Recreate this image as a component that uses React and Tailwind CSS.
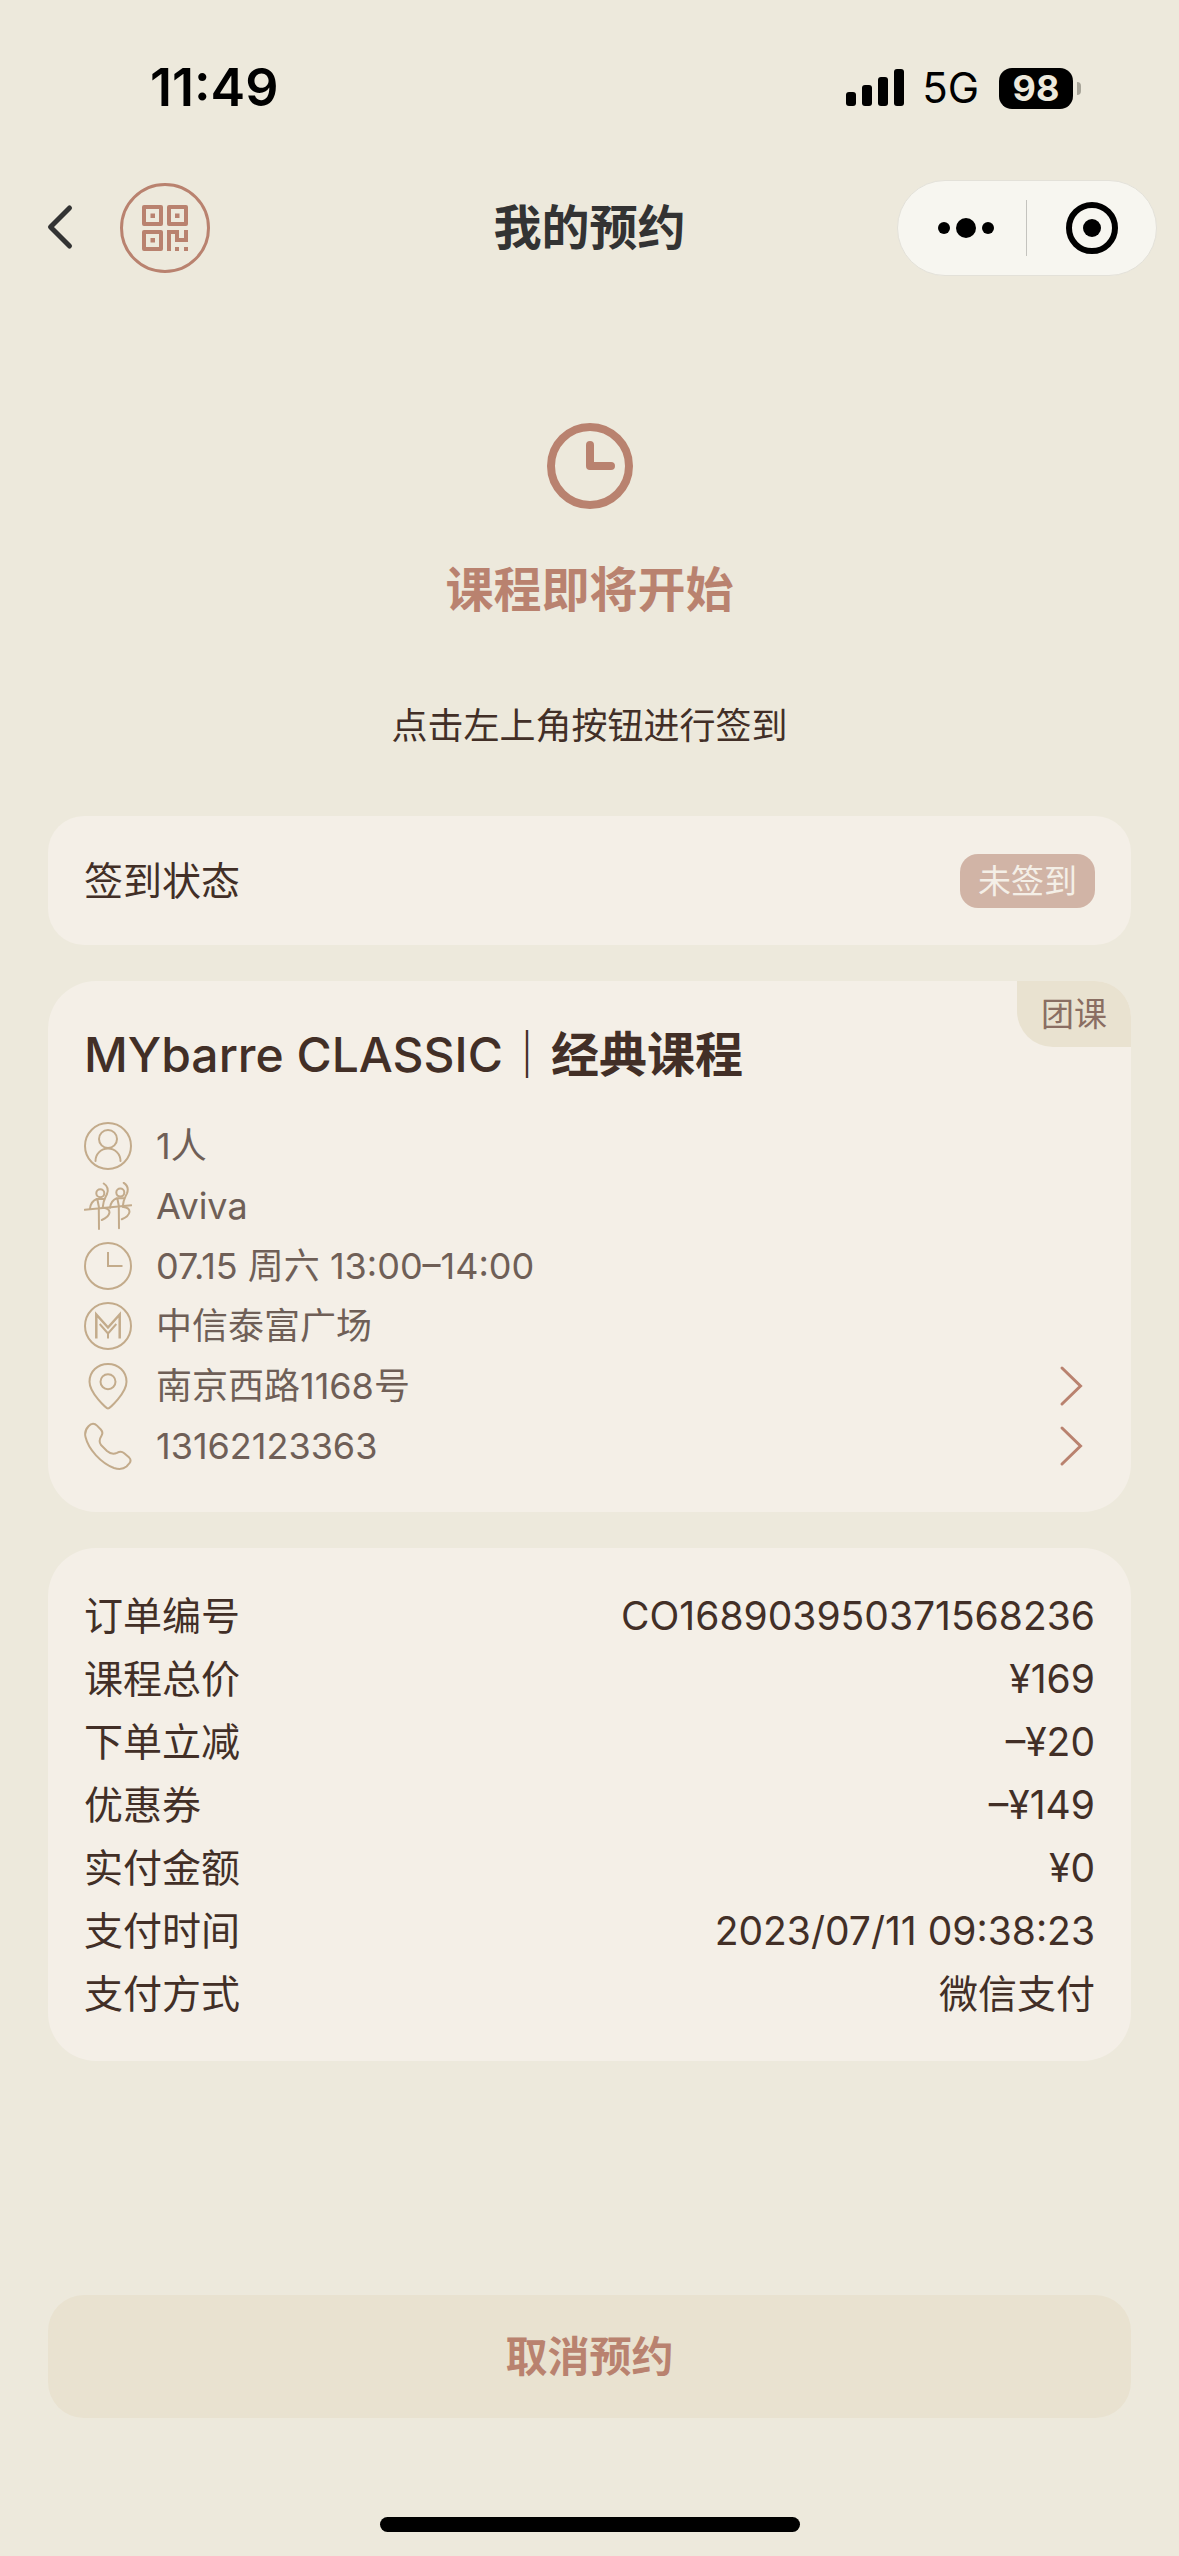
const COURSE = { name: 'MYbarre CLASSIC', localName: '经典课程' }

const COURSE_INFO = [
  { icon: PersonIcon, text: '1人' },
  { icon: DancersIcon, text: 'Aviva' },
  { icon: TimeIcon, text: '07.15 周六 13:00–14:00' },
  { icon: VenueIcon, text: '中信泰富广场' },
  { icon: PinIcon, text: '南京西路1168号', href: '#map' },
  { icon: PhoneIcon, text: '13162123363', href: 'tel:13162123363' },
]

const ORDER_ROWS = [
  { label: '订单编号', value: 'CO168903950371568236' },
  { label: '课程总价', value: '¥169' },
  { label: '下单立减', value: '–¥20' },
  { label: '优惠券', value: '–¥149' },
  { label: '实付金额', value: '¥0' },
  { label: '支付时间', value: '2023/07/11 09:38:23' },
  { label: '支付方式', value: '微信支付' },
]

function LineIcon({ children }) {
  return (
    <svg
      viewBox="0 0 48 48"
      className="size-12 shrink-0 text-[#c3ab8b]"
      fill="none"
      stroke="currentColor"
      strokeWidth="2"
      strokeLinecap="round"
      strokeLinejoin="round"
      aria-hidden="true"
    >
      {children}
    </svg>
  )
}

function PersonIcon() {
  return (
    <LineIcon>
      <circle cx="24" cy="24" r="23" />
      <circle cx="24" cy="17" r="9" />
      <path d="M11.5 39C11.5 32 17 26.5 24 26.5S36.5 32 36.5 39" />
    </LineIcon>
  )
}

function DancersIcon() {
  return (
    <LineIcon>
      <path d="M.8 27.7 47.3 23.2" />
      <g id="dancer">
        <circle cx="16.3" cy="11.3" r="4" />
        <path d="M19.7 1.5C23.5 4 24.5 8 23 12C21.5 15.5 19.5 17 18.7 25.5" />
        <path d="M20 17H12.7C9 18.5 6.5 22 6 26.5M13.3 17 15 25.5M14.8 26.5 15 47" />
        <path d="M19.3 25.7C23 26 25.5 28 25.5 30.5C25 33.5 21.5 36.5 17.8 38" />
      </g>
      <use href="#dancer" x="20" y="-.7" />
    </LineIcon>
  )
}

function TimeIcon() {
  return (
    <LineIcon>
      <circle cx="24" cy="24" r="23" />
      <path d="M24 11V24H37.5" strokeLinecap="square" strokeLinejoin="miter" />
    </LineIcon>
  )
}

function VenueIcon() {
  return (
    <LineIcon>
      <circle cx="24" cy="24" r="23" />
      <path d="M12.3 36.5V12.5L24 25.5 35.7 12.5V36.5" strokeWidth="2.5" strokeLinejoin="miter" strokeLinecap="butt" />
      <path d="M15.7 22 24 31.5 32.3 22M24 31V36.5" strokeLinecap="butt" />
    </LineIcon>
  )
}

function PinIcon() {
  return (
    <LineIcon>
      <path d="M24 46.5C22.5 46.5 5.5 31 5.5 19.7C5.5 9.5 13.5 2 24 2S42.5 9.5 42.5 19.7C42.5 31 25.5 46.5 24 46.5Z" />
      <circle cx="24" cy="19.7" r="7.5" />
    </LineIcon>
  )
}

function PhoneIcon() {
  return (
    <LineIcon>
      <path d="M4.5 4.2C7.5 1 10.5 1 13 3.6L16.8 7.5C18.8 9.7 18.8 11.7 17.5 13.7C15 17.5 14.8 20 17 23L23 29C27 32.5 29.5 32.5 33 30.8C35.5 29.3 38 29.3 40.2 31.2L45.2 35.6C47 37.5 47 39.2 45.5 41.2L42.5 44.5C39 47.5 35 47.5 30 46C17 41 4.5 27.5 1.5 15C.5 11 .8 8.2 4.5 4.2Z" />
    </LineIcon>
  )
}

function QrIcon() {
  return (
    <svg viewBox="0 0 46 46" className="size-[46px]" fill="currentColor" aria-hidden="true">
      <g fill="none" stroke="currentColor" strokeWidth="4" strokeLinejoin="round">
        <path d="M2 2H19V19H2ZM27 2H44V19H27ZM2 27H19V44H2Z" />
        <path d="M27 46V27H35V35H44V25" strokeLinejoin="miter" />
      </g>
      <path d="M8.5 8.5H13V13H8.5ZM33 8.5H37.5V13H33ZM8.5 33H13V37.5H8.5ZM33 42H37V46H33ZM42 42H46V46H42Z" />
    </svg>
  )
}

function StatusBar() {
  return (
    <div className="flex h-[180px] items-start justify-between pt-[58px] pr-[98px] pl-[150px] text-black">
      <time className="text-[52px] leading-[60px] font-semibold">11:49</time>
      <div className="flex h-[60px] items-center">
        <svg viewBox="0 0 58 38" className="h-[38px] w-[58px]" aria-label="信号">
          <rect x="0" y="23" width="10" height="14" rx="3" />
          <rect x="16" y="16" width="10" height="21" rx="3" />
          <rect x="32" y="8" width="10" height="29" rx="3" />
          <rect x="48" y="0" width="10" height="37" rx="3" />
        </svg>
        <span className="ml-[18px] text-[42px] leading-[60px]">5G</span>
        <span className="ml-5 flex h-[41px] w-[74px] items-center justify-center rounded-[13px] bg-black text-[36px] leading-[41px] font-bold text-[#ede9dc]">
          98
        </span>
        <span className="ml-1 h-[13px] w-1 rounded-r-full bg-[#a8a599]" />
      </div>
    </div>
  )
}

function NavBar() {
  return (
    <header className="grid h-24 grid-cols-[1fr_auto_1fr] items-center px-[22px]">
      <div className="flex items-center gap-10 pl-[18px]">
        <button type="button" aria-label="返回" className="text-[#333333]">
          <svg viewBox="0 0 40 48" className="h-12 w-10" fill="none" stroke="currentColor" strokeWidth="5" strokeLinecap="round" strokeLinejoin="round">
            <path d="M29.5 4 10.500 23 29.5 42" />
          </svg>
        </button>
        <button
          type="button"
          aria-label="签到码"
          className="flex size-[90px] items-center justify-center rounded-full border-3 border-[#b9826f] text-[#b9826f]"
        >
          <QrIcon />
        </button>
      </div>
      <h1 className="text-[48px] leading-[60px] font-semibold text-[#333333]">我的预约</h1>
      <div className="flex h-24 w-[260px] items-center justify-self-end rounded-full border border-[#e3e1d9] bg-[#f7f6f0] text-black">
        <button type="button" aria-label="更多" className="flex w-32 justify-center pl-2">
          <svg viewBox="0 0 60 24" className="h-6 w-[60px]" fill="currentColor">
            <circle cx="8" cy="12" r="6" />
            <circle cx="30" cy="12" r="10" />
            <circle cx="52" cy="12" r="6" />
          </svg>
        </button>
        <span className="h-14 w-px bg-[#c4c3be]" />
        <button type="button" aria-label="关闭" className="flex flex-1 justify-center">
          <svg viewBox="0 0 52 52" className="size-[52px]">
            <circle cx="26" cy="26" r="23" fill="none" stroke="currentColor" strokeWidth="6" />
            <circle cx="26" cy="26" r="9" fill="currentColor" />
          </svg>
        </button>
      </div>
    </header>
  )
}

function InfoRow({ icon: Icon, text, href }) {
  const content = (
    <>
      <Icon />
      <span className="flex-1">{text}</span>
      {href && (
        <svg viewBox="0 0 48 48" className="size-12 shrink-0 text-[#b9826f]" fill="none" stroke="currentColor" strokeWidth="3" strokeLinecap="round" aria-hidden="true">
          <path d="M15 6 33.5 24 15 42" />
        </svg>
      )}
    </>
  )

  return (
    <li>
      {href ? (
        <a href={href} className="flex h-[60px] items-center gap-6">{content}</a>
      ) : (
        <div className="flex h-[60px] items-center gap-6">{content}</div>
      )}
    </li>
  )
}

export default function App() {
  return (
    <div className="flex min-h-screen flex-col bg-[#ede9dc] font-['Inter','Noto_Sans_CJK_SC',sans-serif] text-[#422f27]">
      <StatusBar />
      <NavBar />

      <main className="flex flex-1 flex-col px-12">
        {/* Booking status */}
        <section className="flex flex-col items-center pt-[147px]">
          <svg viewBox="0 0 86 86" className="size-[86px] text-[#b9826f]" fill="none" stroke="currentColor" strokeWidth="8" strokeLinecap="round" strokeLinejoin="round" aria-hidden="true">
            <circle cx="43" cy="43" r="39" />
            <path d="M43 22V43H64" />
          </svg>
          <h2 className="mt-12 text-[48px] leading-[66px] font-semibold text-[#b9826f]">课程即将开始</h2>
          <p className="mt-[73px] text-[36px] leading-[60px]">点击左上角按钮进行签到</p>
        </section>

        <div className="mt-[60px] flex flex-col gap-9">
          <section className="flex items-center justify-between rounded-[36px] bg-[#f4efe7] p-9">
            <span className="text-[39px] leading-[57px]">签到状态</span>
            <span className="rounded-[18px] bg-[#d1b4a6] px-[18px] text-[33px] leading-[54px] text-[#f4efe7]">未签到</span>
          </section>

          {/* Course */}
          <section className="relative rounded-[48px] rounded-tr-[36px] bg-[#f4efe7] p-9">
            <span className="absolute top-0 right-0 rounded-tr-[36px] rounded-bl-[36px] bg-[#e9e2d0] px-6 text-[33px] leading-[66px] text-[#8a6e62]">
              团课
            </span>
            <h2 className="text-[48px] leading-[75px] font-semibold">
              <span className="font-medium">{COURSE.name}</span>｜{COURSE.localName}
            </h2>
            <ul className="mt-6 text-[36px] leading-[60px] text-[#6f5f57]">
              {COURSE_INFO.map(item => (
                <InfoRow key={item.text} {...item} />
              ))}
            </ul>
          </section>

          {/* Order details */}
          <dl className="rounded-[48px] bg-[#f4efe7] p-9 text-[39px] leading-[63px]">
            {ORDER_ROWS.map(({ label, value }) => (
              <div key={label} className="flex justify-between">
                <dt>{label}</dt>
                <dd>{value}</dd>
              </div>
            ))}
          </dl>
        </div>

        <button
          type="button"
          className="mt-auto rounded-[36px] bg-[#e9e2d0] text-[42px] leading-[123px] font-semibold text-[#b9826f]"
        >
          取消预约
        </button>
      </main>

      <div className="flex justify-center pt-[99px] pb-6">
        <span className="h-[15px] w-[420px] rounded-full bg-black" />
      </div>
    </div>
  )
}
